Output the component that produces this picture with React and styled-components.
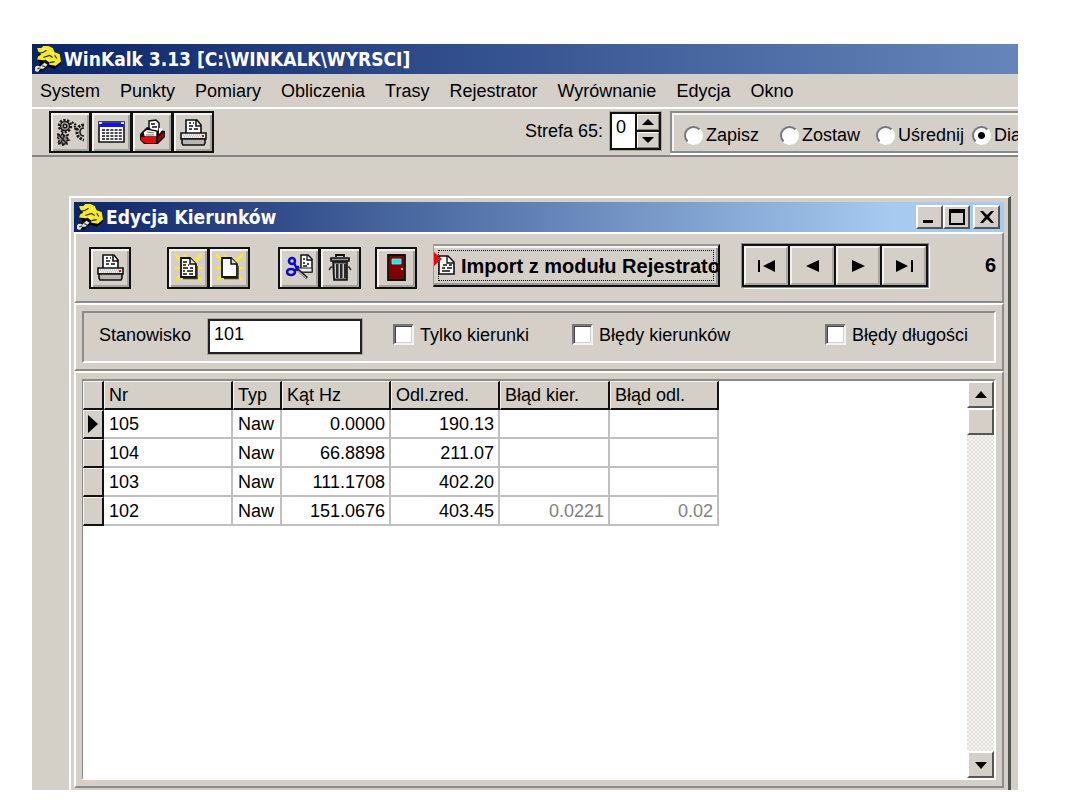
// WinKalk - edycja kierunków
import React, { useState } from "react";
import styled, { createGlobalStyle, css } from "styled-components";

const GlobalStyle = createGlobalStyle`
  * {
    box-sizing: border-box;
  }
  body {
    margin: 0;
    background: #fff;
    color: #000;
    font-family: "Liberation Sans", Arial, sans-serif;
    font-size: 18px;
    line-height: 20px;
  }
  button, input {
    font: inherit;
    color: inherit;
    margin: 0;
  }
`;

const raised = css`
  border: 2px solid;
  border-color: #fff #555 #555 #fff;
  background: #d4d0c8;
`;

const Page = styled.div`
  display: flex;
  min-height: 100vh;
  padding: 44px 62px 20px 32px;
`;

const MainWindow = styled.main`
  flex: 1;
  min-width: 0;
  display: flex;
  flex-direction: column;
  overflow: hidden;
  background: #d4d0c8;
`;

const TitleBar = styled.header`
  display: flex;
  align-items: center;
  gap: 2px;
  height: 30px;
  flex: none;
  padding: 0 4px 0 2px;
  background: ${(p) =>
    p.$inner
      ? "linear-gradient(90deg, #0a246a, #a6caf0 88%)"
      : "linear-gradient(90deg, #0a246a, #6686bb)"};
`;

const Title = styled.h1`
  flex: 1;
  margin: 0;
  color: #fff;
  font-family: "DejaVu Sans Condensed", "DejaVu Sans", sans-serif;
  font-size: 19px;
  font-weight: bold;
  white-space: nowrap;
`;

const CaptionButtons = styled.div`
  display: flex;
`;

const CaptionButton = styled.button`
  ${raised}
  display: flex;
  align-items: center;
  justify-content: center;
  width: 27px;
  height: 24px;
  padding: 0;
  margin-left: ${(p) => (p.$apart ? "3px" : "0")};
`;

const MenuBar = styled.nav`
  display: flex;
  align-items: center;
  gap: 20px;
  height: 33px;
  flex: none;
  padding: 0 8px;
`;

const MenuLink = styled.a`
  color: #000;
  text-decoration: none;
`;

const MainToolbar = styled.div`
  display: flex;
  align-items: flex-start;
  flex: none;
  height: 50px;
  padding: 2px 0 0 17px;
  border-top: 2px solid #fff;
  border-bottom: 2px solid #858585;
`;

const ButtonGroup = styled.div`
  display: flex;
  flex: none;
  margin-right: ${(p) => p.$after || "0"};
`;

const ToolButton = styled.button`
  display: flex;
  align-items: center;
  justify-content: center;
  width: 42px;
  height: 42px;
  padding: 0;
  border: 2px solid #111;
  background: #d4d0c8;
  box-shadow: inset 2px 2px #f4f3f0, inset -2px -2px #a5a29c;
  & + & {
    margin-left: -1px;
  }
`;

const ZoneLabel = styled.label`
  display: flex;
  align-items: center;
  gap: 7px;
  height: 40px;
  margin-left: auto;
  margin-right: 9px;
`;

const Spin = styled.span`
  display: flex;
  width: 51px;
  height: 38px;
  border: 2px solid #111;
  outline: 1px solid #aaa7a1;
  background: #fff;
`;

const SpinInput = styled.input`
  width: 23px;
  height: 26px;
  padding: 0 4px;
  border: 0;
  background: none;
  outline: none;
`;

const SpinButtons = styled.span`
  display: grid;
  flex: 1;
  gap: 2px;
  border-left: 2px solid #111;
  background: #111;
`;

const SpinButton = styled.button`
  display: flex;
  align-items: center;
  justify-content: center;
  padding: 0;
  border: 1px solid;
  border-color: #fff #808080 #808080 #fff;
  background: #d4d0c8;
`;

const ModeGroup = styled.fieldset`
  display: grid;
  grid-template-columns: repeat(4, 96px);
  align-items: center;
  flex: none;
  width: 348px;
  min-width: 0;
  height: 42px;
  margin: 0;
  padding: 6px 0 0 12px;
  border: 2px solid #8b8b8b;
  border-right: 0;
  box-shadow: inset 0 2px #f4f3f0, inset 2px 0 #f4f3f0, 0 2px #fff;
  overflow: hidden;
`;

const Option = styled.label`
  display: flex;
  align-items: center;
  gap: ${(p) => p.$gap || "3px"};
  white-space: nowrap;
`;

const Radio = styled.input`
  appearance: none;
  flex: none;
  width: 19px;
  height: 19px;
  border: 2px solid;
  border-color: #777 #fff #fff #777;
  border-radius: 50%;
  background: #fff;
  &:checked {
    background: radial-gradient(circle, #000 3px, #fff 4px);
  }
`;

const Checkbox = styled.input`
  appearance: none;
  flex: none;
  width: 21px;
  height: 21px;
  border: 2px solid;
  border-color: #777 #f4f3f0 #f4f3f0 #777;
  background: #fff;
  box-shadow: inset 1px 1px #444, inset -1px -1px #d4d0c8;
  &:checked {
    background: radial-gradient(circle, #000 4px, #fff 5px);
  }
`;

const Workspace = styled.div`
  flex: 1;
  display: flex;
  padding: 39px 7px 0 37px;
`;

const ChildWindow = styled.section`
  flex: 1;
  min-width: 0;
  display: flex;
  flex-direction: column;
  padding: 4px 4px 2px 3px;
  border: solid;
  border-width: 2px 3px 0 2px;
  border-color: #fff #555 #555 #fff;
`;

const Panel = styled.div`
  border: solid;
  border-width: 2px;
  border-color: #fff #8b8b8b #8b8b8b #fff;
`;

const EditToolbar = styled(Panel)`
  display: flex;
  align-items: center;
  flex: none;
  height: 71px;
  padding: 0 6px 0 13px;
`;

const ImportButton = styled.button`
  position: relative;
  display: flex;
  align-items: center;
  justify-content: flex-start;
  width: 287px;
  height: 43px;
  margin: 0 22px 4px 0;
  padding: 0;
  overflow: hidden;
  border: 2px solid;
  border-color: #999 #111 #111 #999;
  border-left-width: 1px;
  background: #d4d0c8;
  box-shadow: inset 0 2px #f4f3f0, inset -2px -2px #999;
  font-size: 20px;
  font-weight: bold;
  white-space: nowrap;
  svg {
    flex: none;
  }
  &::after {
    content: "";
    position: absolute;
    inset: 4px;
    border: 1px dotted #000;
  }
`;

const Navigator = styled.div`
  display: flex;
  height: 43px;
  margin-bottom: 4px;
  padding: 2px;
  gap: 2px;
  background: #111;
  box-shadow: 0 0 0 1px #8b8b8b, 2px 2px #fff;
`;

const NavButton = styled.button`
  display: flex;
  align-items: center;
  justify-content: center;
  width: 44px;
  padding: 0;
  border: 2px solid;
  border-color: #f4f3f0 #aaa7a1 #aaa7a1 #f4f3f0;
  background: #d4d0c8;
`;

const Counter = styled.output`
  margin: 0 0 6px auto;
  font-size: 20px;
  font-weight: bold;
`;

const StationPanel = styled(Panel)`
  flex: none;
  height: 68px;
  padding: 6px;
`;

const StationBox = styled.div`
  display: flex;
  align-items: flex-start;
  height: 52px;
  padding: 6px 26px 0 15px;
  border: 2px solid;
  border-color: #8b8b8b #fff #fff #8b8b8b;
`;

const StationLabel = styled.label`
  display: flex;
  align-items: flex-start;
  gap: 17px;
  & > span {
    padding-top: 6px;
  }
`;

const StationInput = styled.input`
  width: 154px;
  height: 35px;
  padding: 0 4px 5px;
  border: 2px solid #222;
  outline: 1px solid #aaa7a1;
  border-radius: 0;
  background: #fff;
`;

const CheckOption = styled(Option)`
  margin: 5px 0 0 ${(p) => p.$before};
`;

const GridPanel = styled(Panel)`
  flex: 1;
  display: flex;
  padding: 6px;
`;

const GridBox = styled.div`
  flex: 1;
  display: flex;
  align-items: flex-start;
  justify-content: space-between;
  border: 2px solid;
  border-color: #8b8b8b #fff #fff #8b8b8b;
  border-left-width: 1px;
  background: #fff;
`;

const Table = styled.table`
  table-layout: fixed;
  width: 636px;
  border-collapse: separate;
  border-spacing: 0;
`;

const HeadCell = styled.th`
  width: ${(p) => p.$width};
  height: 29px;
  padding: 0 0 0 4px;
  border: 1px solid;
  border-width: 1px 2px 2px 1px;
  border-color: #f4f3f0 #111 #111 #f4f3f0;
  background: #d4d0c8;
  font-weight: normal;
  text-align: left;
  white-space: nowrap;
`;

const Marker = styled.th`
  height: 29px;
  padding: 0 2px;
  border: 1px solid;
  border-width: 1px 2px 2px 1px;
  border-color: #f4f3f0 #111 #111 #f4f3f0;
  background: #d4d0c8;
  svg {
    display: block;
  }
`;

const Cell = styled.td`
  height: 29px;
  padding: 0 4px 0 5px;
  border: solid #c0c0c0;
  border-width: 0 2px 2px 0;
  color: ${(p) => (p.$dim ? "#808080" : "#000")};
  text-align: ${(p) => (p.$number ? "right" : "left")};
`;

const ScrollBar = styled.div`
  align-self: stretch;
  display: flex;
  flex-direction: column;
  width: 27px;
  background: repeating-conic-gradient(#e2e0db 0 25%, #f6f5f3 0 50%) 0 0 / 4px 4px;
`;

const ScrollButton = styled.button`
  ${raised}
  display: flex;
  align-items: center;
  justify-content: center;
  height: 27px;
  padding: 0;
  margin-top: ${(p) => (p.$last ? "auto" : "0")};
`;

// ikony
const Icon = ({ size = 27, children }) => (
  <svg width={size} height={size} viewBox="0 0 27 27" fill="none" aria-hidden="true">
    {children}
  </svg>
);

const Arrow = ({ d, w = 12, h = 12 }) => (
  <svg width={w} height={h} viewBox={`0 0 ${w} ${h}`} fillRule="evenodd" aria-hidden="true">
    <path d={d} />
  </svg>
);

const AppIcon = () => (
  <Icon size={28}>
    <path d="M5 5 9 2l9 3 4 4h4v9l-6 5-6-2-5 2-5-9z" fill="#000" />
    <path d="M3 3h4l2-2h5l4 2 2 4 5 2 1 7-5 4-6-1-4-4-8-1 1-3 3-2-3-3z" fill="#f8ec18" />
    <path d="M5 8l4-1 3-2M9 12l6-2 3 2M20 10l2 3M15 17l5-1" stroke="#222" strokeWidth="1.1" />
    <path d="M8 4h3M15 6l3 2M12 14h3" stroke="#fffbb0" strokeWidth="1.2" />
    <path d="M1 21c2-3 5-2 7-4l3-3 4 3-1 4-4 2-2 3-5 0z" fill="#111" />
    <path d="M1 22c1-3 4-2 5-1l4-4 3 2-4 4-3 0-2 3-3-1z" fill="#e8e8e8" />
    <path d="M3 23l3-1M8 20l3 1" stroke="#555" strokeWidth="1.3" />
  </Icon>
);

const PrinterIcon = () => (
  <Icon>
    <path d="M6 14V1h11l4 5v8" fill="#fff" stroke="#111" strokeWidth="1.6" />
    <path d="M16 1v6h5" stroke="#111" strokeWidth="1.6" />
    <path d="M9 4h2M13 4h1M9 7h4M9 10h3M14 10h4" stroke="#111" strokeWidth="1.5" />
    <path d="M1 14h25v6H1z" fill="#eee" stroke="#111" strokeWidth="1.6" />
    <path d="M3 16h19M4 18h19" stroke="#aaa" strokeDasharray="1 1" />
    <path d="M2 20h23v4l-1 2H3l-1-2z" fill="#b8b6b2" stroke="#111" strokeWidth="1.6" />
    <path d="M22 16h2v2h-2z" fill="#f00" />
  </Icon>
);

const GearsIcon = () => (
  <Icon>
    <g stroke="#1a1a1a">
      <circle cx="8" cy="7" r="6" strokeWidth="2.5" strokeDasharray="2.2 1.5" />
      <circle cx="8" cy="7" r="4.5" fill="#aaa" strokeWidth="1.5" />
      <circle cx="8" cy="7" r="1.8" fill="#d4d0c8" strokeWidth="1.5" />
      <path d="M27 6c-4 0-6 2-7 5v3c0 3 3 6 7 7" strokeWidth="3" strokeDasharray="2.4 1.2" />
      <path d="M27 9c-3 0-4 2-4 4s1 4 4 4" strokeWidth="1.6" />
      <path d="M0 15l4 1 2-2 1 3 4-1-1 3 2 2-3 1 1 3-3 0-1 2-1-3-4 1 1-3z" fill="#888" strokeWidth="1.6" strokeDasharray="3 1" />
      <path d="M15 3l4 3-2 3 3 2" strokeWidth="2" strokeDasharray="2 1" />
      <path d="M1 15l9 10M3 25l5-9" strokeWidth="1.2" />
    </g>
  </Icon>
);

const TableIcon = () => (
  <Icon>
    <path d="M1 3h25v20H1z" fill="#fff" stroke="#111" strokeWidth="1.6" />
    <path d="M2 4h23v4H2z" fill="#1010ff" />
    <path d="M1 3h3v2H1zM23 3h3v2h-3z" fill="#ddd" />
    <path d="M4 11h20M4 14h20M4 17h20M4 20h20" stroke="#111" strokeWidth="1.4" strokeDasharray="3 1.2" />
  </Icon>
);

const TrayIcon = () => (
  <Icon>
    <path d="M1 15 8 8l18 4v6l-7 7H5l-4-4z" fill="#111" />
    <path d="M10 9V2l7-1 3 3v8l-5 3z" fill="#fff" stroke="#111" strokeWidth="1.5" />
    <path d="M12 5h4M13 8h5" stroke="#111" strokeWidth="1.3" />
    <path d="M4 13l4-3 10 2v6H5z" fill="#fff" stroke="#111" strokeWidth="1.5" />
    <path d="M8 13l7 1M7 16h8" stroke="#777" strokeWidth="1.2" />
    <path d="M2 18h15v6H6l-4-3z" fill="#f00" />
    <path d="M19 18l6-5v4l-6 6z" fill="#a00000" />
    <path d="M20 9l4 1-4 5z" fill="#fff" />
  </Icon>
);

const NewPageIcon = ({ lines }) => (
  <Icon>
    <path d="M0 1l6 5M27 0l-8 8M1 26l6-5M20 20l6 6M0 14h6M21 14h6M9 1l2 4M10 26l1-3M17 26l-1-3" stroke="#fff000" strokeWidth="2.4" />
    <path d="M6 23V4h9l6 6v13z" fill="#fff" stroke="#111" strokeWidth="1.8" />
    <path d="M15 4v6h6" fill="#ddd" stroke="#111" strokeWidth="1.5" />
    <path d="M8 24.500h14V12" stroke="#333" strokeWidth="1.5" />
    {lines && <path d="M8 8h4M8 11h3M13 11h1M8 14h5M15 14h3M8 17h2M12 17h6M8 20h4M14 20h4" stroke="#111" strokeWidth="1.5" />}
  </Icon>
);

const ScissorsIcon = () => (
  <Icon>
    <path d="M15 14V1h7l4 4v13h-9z" fill="#fff" stroke="#111" strokeWidth="1.5" />
    <path d="M21 1v5h5M17 5h2M17 9h2M21 10h2M17 12h4" stroke="#111" strokeWidth="1.3" />
    <path d="M11 14h15v4H14z" fill="#eee" stroke="#222" />
    <path d="M11 15l10 9" stroke="#222" strokeWidth="3" />
    <path d="M12 17l8 7" stroke="#aaa" strokeWidth="1.2" />
    <circle cx="6" cy="7" r="3" stroke="#0808d8" strokeWidth="2.6" />
    <ellipse cx="5" cy="18" rx="4" ry="3" stroke="#0808d8" strokeWidth="2.6" />
    <path d="M8 9l3 6-3 2M10 13h3" stroke="#0808d8" strokeWidth="2.4" />
  </Icon>
);

const TrashIcon = () => (
  <Icon>
    <path d="M9 3V1h8v2" stroke="#111" strokeWidth="1.8" />
    <path d="M4 4h18v3H4z" fill="#999" stroke="#111" strokeWidth="1.6" />
    <path d="M6 8h14v18H7z" fill="#777" stroke="#111" strokeWidth="1.6" />
    <path d="M10 10v14M14 10v14M18 10v14" stroke="#111" strokeWidth="1.5" />
    <path d="M8.500 10v14M12.500 10v14M16.500 10v14" stroke="#ccc" />
    <path d="M2 16l2-3h2M24 16l-2-3h-2" stroke="#333" strokeWidth="1.5" />
  </Icon>
);

const DoorIcon = () => (
  <Icon>
    <path d="M5 1h17v25H5z" fill="#800000" stroke="#111" strokeWidth="1.8" />
    <path d="M9 5h9v5H9z" fill="#00f0f8" stroke="#ccc" strokeWidth=".8" />
    <path d="M18 14h2v2h-2z" fill="#e0d000" />
  </Icon>
);

const ImportIcon = () => (
  <Icon>
    <path d="M5 22V4h9l6 6v12z" fill="#fff" stroke="#111" strokeWidth="1.6" />
    <path d="M13 4v7h7M9 13h4M15 13h3M8 16h3M13 16h5M8 19h8" stroke="#111" strokeWidth="1.4" />
    <path d="M0 0l8 7-8 7z" fill="#f00" />
  </Icon>
);

const menu = ["System", "Punkty", "Pomiary", "Obliczenia", "Trasy", "Rejestrator", "Wyrównanie", "Edycja", "Okno"];
const modes = ["Zapisz", "Zostaw", "Uśrednij", "Dia"];

const columns = [
  { name: "Nr", width: "129px" },
  { name: "Typ", width: "49px" },
  { name: "Kąt Hz", width: "109px" },
  { name: "Odl.zred.", width: "109px" },
  { name: "Błąd kier.", width: "110px" },
  { name: "Błąd odl.", width: "109px" },
];

const rows = [
  ["105", "Naw", "0.0000", "190.13", "", ""],
  ["104", "Naw", "66.8898", "211.07", "", ""],
  ["103", "Naw", "111.1708", "402.20", "", ""],
  ["102", "Naw", "151.0676", "403.45", "0.0221", "0.02"],
];

const App = () => {
  const [zone, setZone] = useState(0);
  const [mode, setMode] = useState("Dia");
  const [station, setStation] = useState("101");
  const [current, setCurrent] = useState(0);

  const goTo = (i) => setCurrent(Math.max(0, Math.min(rows.length - 1, i)));

  return (
    <Page>
      <GlobalStyle />
      <MainWindow>
        <TitleBar>
          <AppIcon />
          <Title>WinKalk 3.13 [C:\WINKALK\WYRSCI]</Title>
        </TitleBar>
        <MenuBar>
          {menu.map((m) => <MenuLink href="#" key={m}>{m}</MenuLink>)}
        </MenuBar>
        <MainToolbar>
          <ButtonGroup>
            <ToolButton aria-label="Ustawienia"><GearsIcon /></ToolButton>
            <ToolButton aria-label="Tabela"><TableIcon /></ToolButton>
            <ToolButton aria-label="Kartoteka"><TrayIcon /></ToolButton>
            <ToolButton aria-label="Drukuj"><PrinterIcon /></ToolButton>
          </ButtonGroup>
          <ZoneLabel htmlFor="zone">
            Strefa 65:
            <Spin>
              <SpinInput id="zone" value={zone} onChange={(e) => setZone(Number(e.target.value) || 0)} />
              <SpinButtons>
                <SpinButton aria-label="Więcej" onClick={() => setZone(zone + 1)}><Arrow d="M0 7 6 1l6 6z" h={8} /></SpinButton>
                <SpinButton aria-label="Mniej" onClick={() => setZone(zone - 1)}><Arrow d="M0 1h12L6 7z" h={8} /></SpinButton>
              </SpinButtons>
            </Spin>
          </ZoneLabel>
          <ModeGroup>
            {modes.map((m) => (
              <Option key={m}>
                <Radio type="radio" name="mode" checked={mode === m} onChange={() => setMode(m)} />
                {m}
              </Option>
            ))}
          </ModeGroup>
        </MainToolbar>

        <Workspace>
          <ChildWindow>
            <TitleBar $inner>
              <AppIcon />
              <Title as="h2">Edycja Kierunków</Title>
              <CaptionButtons>
                <CaptionButton aria-label="Minimalizuj"><Arrow d="M1 11h10v3H1z" w={16} h={16} /></CaptionButton>
                <CaptionButton aria-label="Maksymalizuj"><Arrow d="M0 0h16v16H0zM2 4v10h12V4z" w={16} h={16} /></CaptionButton>
                <CaptionButton aria-label="Zamknij" $apart><Arrow d="M0 1h3l4 4 4-4h3L9 7l5 6h-3L7 9l-4 4H0l5-6z" w={14} h={14} /></CaptionButton>
              </CaptionButtons>
            </TitleBar>

            <EditToolbar>
              <ButtonGroup $after="36px">
                <ToolButton aria-label="Drukuj"><PrinterIcon /></ToolButton>
              </ButtonGroup>
              <ButtonGroup $after="28px">
                <ToolButton aria-label="Nowy z kopii"><NewPageIcon lines /></ToolButton>
                <ToolButton aria-label="Nowy"><NewPageIcon /></ToolButton>
              </ButtonGroup>
              <ButtonGroup $after="14px">
                <ToolButton aria-label="Wytnij"><ScissorsIcon /></ToolButton>
                <ToolButton aria-label="Usuń"><TrashIcon /></ToolButton>
              </ButtonGroup>
              <ButtonGroup $after="16px">
                <ToolButton aria-label="Wyjście"><DoorIcon /></ToolButton>
              </ButtonGroup>
              <ImportButton><ImportIcon />Import z modułu Rejestrato</ImportButton>
              <Navigator>
                <NavButton aria-label="Pierwszy" onClick={() => goTo(0)}><Arrow d="M0 0h2v12H0zM17 0v12L5 6z" w={17} /></NavButton>
                <NavButton aria-label="Poprzedni" onClick={() => goTo(current - 1)}><Arrow d="M13 0v12L0 6z" w={13} /></NavButton>
                <NavButton aria-label="Następny" onClick={() => goTo(current + 1)}><Arrow d="M0 0l13 6-13 6z" w={13} /></NavButton>
                <NavButton aria-label="Ostatni" onClick={() => goTo(rows.length - 1)}><Arrow d="M0 0l12 6-12 6zM15 0h2v12h-2z" w={17} /></NavButton>
              </Navigator>
              <Counter>6</Counter>
            </EditToolbar>

            <StationPanel>
              <StationBox>
                <StationLabel>
                  <span>Stanowisko</span>
                  <StationInput value={station} onChange={(e) => setStation(e.target.value)} />
                </StationLabel>
                <CheckOption $gap="6px" $before="31px"><Checkbox type="checkbox" />Tylko kierunki</CheckOption>
                <CheckOption $gap="6px" $before="43px"><Checkbox type="checkbox" />Błędy kierunków</CheckOption>
                <CheckOption $gap="6px" $before="auto"><Checkbox type="checkbox" />Błędy długości</CheckOption>
              </StationBox>
            </StationPanel>

            <GridPanel>
              <GridBox>
                <Table>
                  <thead>
                    <tr>
                      <HeadCell $width="21px" aria-label="Wskaźnik" />
                      {columns.map((c) => <HeadCell key={c.name} $width={c.width}>{c.name}</HeadCell>)}
                    </tr>
                  </thead>
                  <tbody>
                    {rows.map((row, i) => (
                      <tr key={row[0]} onClick={() => goTo(i)}>
                        <Marker>{i === current && <Arrow d="M2 0l10 9-10 9z" h={18} />}</Marker>
                        {row.map((value, j) => (
                          <Cell key={j} $number={j > 1} $dim={j > 3}>{value}</Cell>
                        ))}
                      </tr>
                    ))}
                  </tbody>
                </Table>
                <ScrollBar>
                  <ScrollButton aria-label="W górę"><Arrow d="M0 7 6 0l6 7z" h={8} /></ScrollButton>
                  <ScrollButton aria-label="Suwak" />
                  <ScrollButton aria-label="W dół" $last><Arrow d="M0 1h12L6 8z" h={8} /></ScrollButton>
                </ScrollBar>
              </GridBox>
            </GridPanel>
          </ChildWindow>
        </Workspace>
      </MainWindow>
    </Page>
  );
};

export default App;
